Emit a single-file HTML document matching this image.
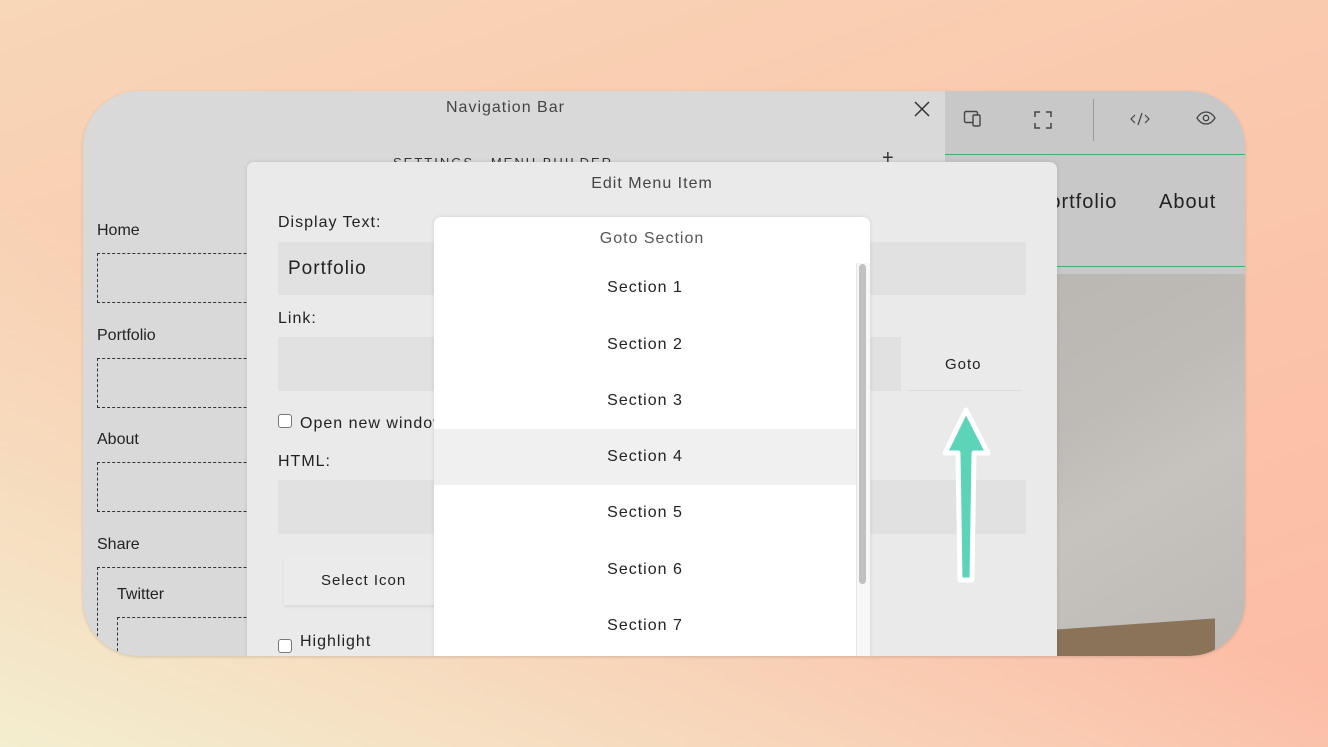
<!DOCTYPE html>
<html><head><meta charset="utf-8"><style>
*{margin:0;padding:0;box-sizing:border-box}
body{width:1328px;height:747px;overflow:hidden;position:relative;font-family:"Liberation Sans",sans-serif;
background:linear-gradient(160deg,#f8d6b8 0%,#fac8ad 45%,#fcbba5 100%);}
.bg2{position:absolute;inset:0;background:linear-gradient(20deg,#f3eecf 0%,rgba(243,238,207,0) 45%);}
.win{position:absolute;left:83px;top:91px;width:1162px;height:565px;border-radius:56px;overflow:hidden;background:#d9d9d9;box-shadow:0 1px 3px rgba(0,0,0,.15)}
.abs{position:absolute}
.t{position:absolute;color:#222;white-space:nowrap}
.dash{position:absolute;border:1px dashed #333}
.right{position:absolute;left:862px;top:0;width:300px;height:565px;background:#c8c8c8}
.modal{position:absolute;left:164px;top:71px;width:810px;height:520px;background:#eaeaea;border-radius:7px;box-shadow:0 0 4px rgba(0,0,0,.12)}
.inp{position:absolute;background:#e1e1e1}
.lbl{position:absolute;font-size:16px;letter-spacing:1px;color:#222}
.dd{position:absolute;left:187px;top:55px;width:436px;height:460px;background:#fff;border-radius:7px;box-shadow:0 0 4px rgba(0,0,0,.1)}
.sec{position:absolute;left:0;width:422px;height:56px;line-height:56px;text-align:center;font-size:16px;letter-spacing:1px;color:#222}
.cb{position:absolute;width:14px;height:14px;border:1px solid #777;border-radius:3px;background:#fff}
</style></head><body><div class="bg2"></div>
<div class="win">
  <div class="t" style="left:363px;top:8px;font-size:16px;letter-spacing:1px;color:#444">Navigation Bar</div>
  <svg class="abs" style="left:831px;top:10px" width="16" height="16" viewBox="0 0 16 16"><path d="M1 1L15 15M15 1L1 15" stroke="#333" stroke-width="1.5"/></svg>
  <div class="t" style="left:310px;top:64px;font-size:13px;letter-spacing:2px;color:#333">SETTINGS &nbsp;&nbsp;MENU BUILDER</div>
  <div class="t" style="left:799px;top:56px;font-size:20px;color:#333">+</div>
  <div class="t" style="left:14px;top:131px;font-size:16px">Home</div>
  <div class="dash" style="left:14px;top:162px;width:200px;height:50px"></div>
  <div class="t" style="left:14px;top:236px;font-size:16px">Portfolio</div>
  <div class="dash" style="left:14px;top:267px;width:200px;height:50px"></div>
  <div class="t" style="left:14px;top:340px;font-size:16px">About</div>
  <div class="dash" style="left:14px;top:371px;width:200px;height:50px"></div>
  <div class="t" style="left:14px;top:445px;font-size:16px">Share</div>
  <div class="dash" style="left:14px;top:476px;width:200px;height:120px"></div>
  <div class="t" style="left:34px;top:495px;font-size:16px">Twitter</div>
  <div class="dash" style="left:34px;top:526px;width:180px;height:60px"></div>

  <div class="right">
    <svg class="abs" style="left:18px;top:18px" width="22" height="20" viewBox="0 0 22 20"><rect x="1.5" y="2.5" width="13" height="11" rx="1.5" fill="none" stroke="#444" stroke-width="1.4"/><rect x="10" y="6" width="7" height="11" rx="1.2" fill="#c8c8c8" stroke="#444" stroke-width="1.4"/></svg>
    <svg class="abs" style="left:89px;top:20px" width="18" height="18" viewBox="0 0 18 18"><path d="M1 6V1H6M12 1H17V6M17 12V17H12M6 17H1V12" fill="none" stroke="#444" stroke-width="1.5"/></svg>
    <div class="abs" style="left:148px;top:8px;width:1px;height:42px;background:#999"></div>
    <svg class="abs" style="left:185px;top:20px" width="20" height="16" viewBox="0 0 20 16"><path d="M5 4L1 8L5 12M15 4L19 8L15 12M12 2L8 14" fill="none" stroke="#444" stroke-width="1.2"/></svg>
    <svg class="abs" style="left:251px;top:19px" width="20" height="16" viewBox="0 0 20 16"><path d="M1 8C4 3 7 2 10 2S16 3 19 8C16 13 13 14 10 14S4 13 1 8Z" fill="none" stroke="#444" stroke-width="1.3"/><circle cx="10" cy="8" r="2.7" fill="none" stroke="#444" stroke-width="1.3"/></svg>
    <div class="abs" style="left:0;top:63px;width:300px;height:1px;background:#3bb465"></div>
    <div class="abs" style="left:0;top:175px;width:300px;height:1px;background:#3bb465"></div>
    <div class="t" style="left:90px;top:100px;font-size:20px;letter-spacing:1px">Portfolio</div>
    <div class="t" style="left:214px;top:100px;font-size:20px;letter-spacing:1px">About</div>
    <div class="abs" style="left:0;top:183px;width:300px;height:382px;background:linear-gradient(150deg,#b9b5b1 0%,#bebab6 40%,#c6c3bf 60%,#bdb9b4 100%)"></div>
    <div class="abs" style="left:110px;top:533px;width:160px;height:40px;background:#8a7358;transform:skewY(-4deg)"></div>
  </div>

  <div class="modal">
    <div class="t" style="left:0;width:810px;text-align:center;top:13px;font-size:16px;letter-spacing:1px;color:#444">Edit Menu Item</div>
    <div class="lbl" style="left:31px;top:52px">Display Text:</div>
    <div class="inp" style="left:31px;top:80px;width:748px;height:53px"></div>
    <div class="t" style="left:41px;top:96px;font-size:19px;letter-spacing:1px">Portfolio</div>
    <div class="lbl" style="left:31px;top:148px">Link:</div>
    <div class="inp" style="left:31px;top:175px;width:623px;height:54px"></div>
    <div class="t" style="left:698px;top:194px;font-size:15px;letter-spacing:1px">Goto</div>
    <div class="abs" style="left:660px;top:228px;width:115px;height:1px;background:#ddd"></div>
    <div class="cb" style="left:31px;top:252px"></div>
    <div class="lbl" style="left:53px;top:253px">Open new window</div>
    <div class="lbl" style="left:31px;top:291px">HTML:</div>
    <div class="inp" style="left:31px;top:318px;width:748px;height:54px"></div>
    <div class="abs" style="left:37px;top:395px;width:160px;height:48px;background:#ebebeb;box-shadow:0 2px 3px rgba(0,0,0,.08)"></div>
    <div class="t" style="left:74px;top:410px;font-size:15px;letter-spacing:1px">Select Icon</div>
    <div class="cb" style="left:31px;top:477px"></div>
    <div class="lbl" style="left:53px;top:471px">Highlight</div>
    <svg class="abs" style="left:690px;top:240px" width="60" height="190" viewBox="0 0 60 190"><path d="M29 8L51 51H37L35 178H23L21 51H8Z" fill="#5dd3b8" stroke="#fff" stroke-width="5" stroke-linejoin="round"/></svg>
    <div class="dd">
      <div class="t" style="left:0;width:436px;text-align:center;top:13px;font-size:16px;letter-spacing:1px;color:#555">Goto Section</div>
      <div class="abs" style="left:0;top:212px;width:422px;height:56px;background:#f0f0f0"></div>
      <div class="sec" style="top:43px">Section 1</div>
      <div class="sec" style="top:100px">Section 2</div>
      <div class="sec" style="top:156px">Section 3</div>
      <div class="sec" style="top:212px">Section 4</div>
      <div class="sec" style="top:268px">Section 5</div>
      <div class="sec" style="top:325px">Section 6</div>
      <div class="sec" style="top:381px">Section 7</div>
      <div class="abs" style="left:422px;top:46px;width:14px;height:414px;background:#f7f7f7;border-left:1px solid #e6e6e6"></div>
      <div class="abs" style="left:425px;top:47px;width:7px;height:320px;background:#c1c1c1;border-radius:4px"></div>
    </div>
  </div>
</div>
</body></html>
